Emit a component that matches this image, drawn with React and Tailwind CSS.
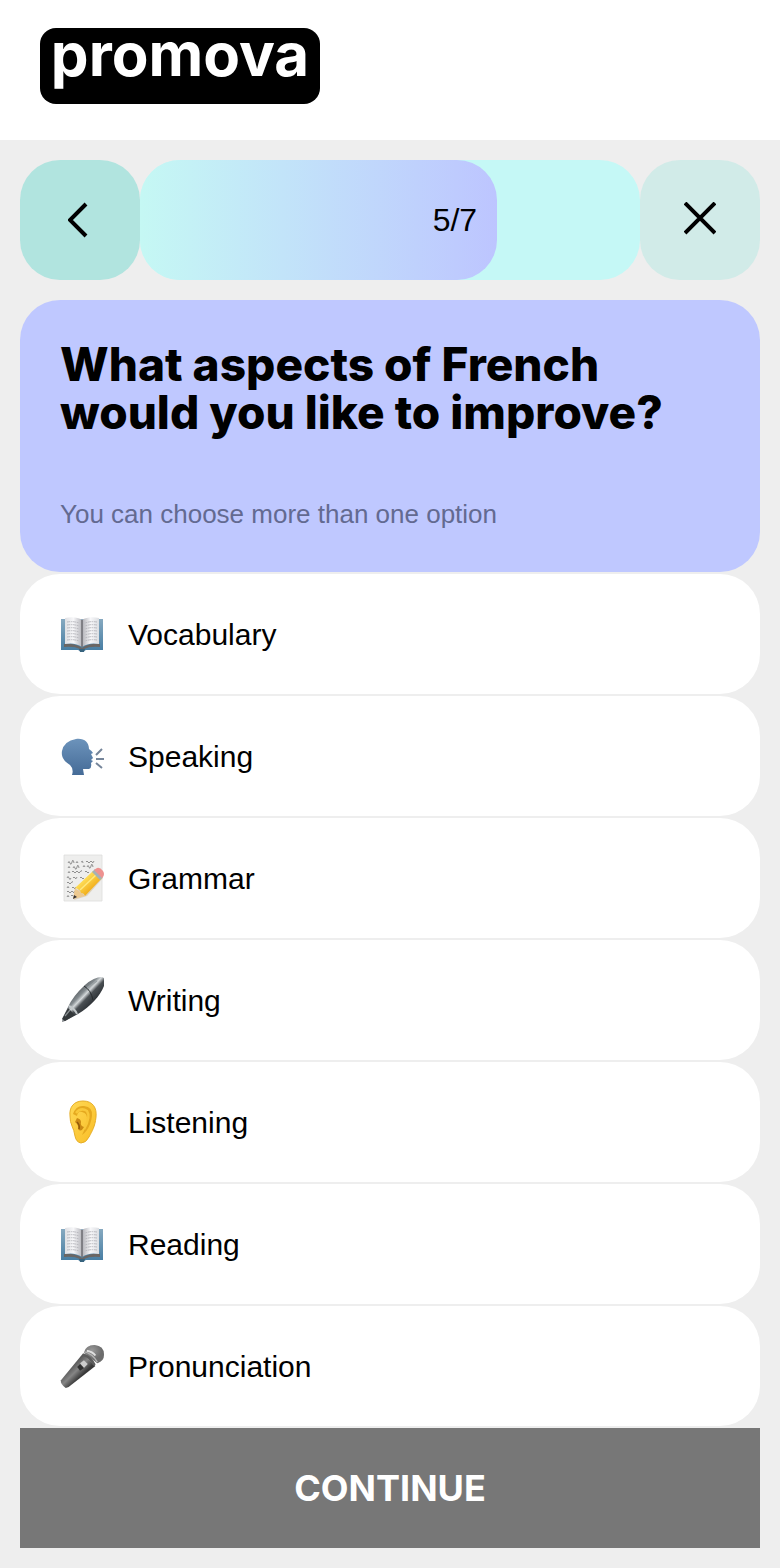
import { useState } from "react";

const BookIcon = () => (
  <svg viewBox="-1 0 44 36" className="w-11" aria-hidden="true">
    <defs>
      <linearGradient id="cover" x1="0" y1="0" x2="0" y2="1">
        <stop offset="0" stopColor="#86a9c0" />
        <stop offset="1" stopColor="#467da3" />
      </linearGradient>
      <linearGradient id="pageLeft" x1="0" y1="0" x2="1" y2="0">
        <stop offset="0" stopColor="#dfe0e4" />
        <stop offset="0.5" stopColor="#f7f7f9" />
        <stop offset="1" stopColor="#b5b5bb" />
      </linearGradient>
      <linearGradient id="pageRight" x1="1" y1="0" x2="0" y2="0">
        <stop offset="0" stopColor="#dcdee2" />
        <stop offset="0.5" stopColor="#f7f7f9" />
        <stop offset="1" stopColor="#b0b0b6" />
      </linearGradient>
    </defs>
    <path d="M0 3H42V34H25Q24 35 21 35Q18 35 17 34H0Z" fill="url(#cover)" />
    <path d="M3 28Q14 27 21 32Q28 27 39 28V31Q29 30 23 33H19Q13 30 3 31Z" fill="#6a6664" />
    <path d="M4 2Q15 0 21 4V31Q14 26 4 28Z" fill="url(#pageLeft)" />
    <path d="M38 2Q27 0 21 4V31Q28 26 38 28Z" fill="url(#pageRight)" />
    <path d="M21 4V31" stroke="#68686d" strokeWidth="1.4" />
    <path
      d="M6 6Q13 5 18 7M6 9Q13 8 18 10M6 12Q13 11 18 13M6 15Q13 14 18 16M6 18Q13 17 18 19M6 21Q13 20 18 22M6 24Q13 23 18 25M36 6Q29 5 24 7M36 9Q29 8 24 10M36 12Q29 11 24 13M36 15Q29 14 24 16M36 18Q29 17 24 19M36 21Q29 20 24 22M36 24Q29 23 24 25"
      fill="none"
      stroke="#acacb3"
      strokeWidth="0.8"
      strokeDasharray="3 0.7 1.6 0.6"
    />
    <path d="M18 33H24L23 36H19Z" fill="#37637e" />
  </svg>
);

const SpeakingIcon = () => (
  <svg viewBox="0 -3 44 44" className="w-11" aria-hidden="true">
    <defs>
      <linearGradient id="head" x1="0" y1="0" x2="0" y2="1">
        <stop offset="0" stopColor="#6c93bb" />
        <stop offset="1" stopColor="#456b97" />
      </linearGradient>
    </defs>
    <path
      d="M16 2C24 1 29 5 29 12Q32 14 33 16L31 17L33 21L31 23L33 24L31 26Q32 31 29 32L23 32L24 38H12Q14 32 10 28C4 24 1 20 2 14Q4 4 16 2Z"
      fill="url(#head)"
    />
    <path d="M36 18L42 12M36 22H45M36 26L42 31" stroke="#75859a" strokeWidth="2" fill="none" />
  </svg>
);

const GrammarIcon = () => (
  <svg viewBox="-1 0 44 48" className="w-11" aria-hidden="true">
    <defs>
      <linearGradient id="pencil" x1="0" y1="0" x2="1" y2="1">
        <stop offset="0.3" stopColor="#ffe15c" />
        <stop offset="0.65" stopColor="#f3b321" />
      </linearGradient>
    </defs>
    <path d="M3 1H41V47H3Z" fill="#eeeeed" stroke="#dddddc" strokeWidth="0.8" />
    <path
      d="M7 9q1-3 2 0t2-1t2 1m2 0q1-3 2 0m3-1q2-2 2 1m3-1q1-2 2 0t2 0t2 0t2-1M7 14q1-3 2 0m3 0q1-3 2 0t2-1t2 1m4-1q1-3 2 0m2 0q1-3 2 0t2-1t2 1M7 19q1-3 2 0m2-1q1-2 2 0t2 0t2 0t2 0t2-1m3 1q1-2 2 0t2 0M6 24q1-3 2 0t2 0m2 0q1-2 2 0t2-1m3 1q1-2 2 0t2 0M6 29q1-2 2 0t2 0t2-1M6 34q1-3 2 0m3 0q1-2 2 0t2-1M6 38q1-2 2 0t2 0t2 0t2-1M6 43q1-3 2 0m2-1q1-2 2 0"
      fill="none"
      stroke="#777777"
      strokeWidth="0.8"
    />
    <path d="M13 46L17 34L35 18L42 24L26 42Z" fill="#c5a97b" opacity="0.4" />
    <path d="M12 45L14 34L24 42Z" fill="#edc990" />
    <path d="M12 45L13 41L16 43Z" fill="#363334" />
    <path d="M14 34L32 17L41 24L24 42Q23 39 20 39Q19 35 14 34Z" fill="url(#pencil)" />
    <path d="M19 36L36 20" stroke="#ffe97e" strokeWidth="1.5" />
    <path d="M31 18L34 15L42 23L39 26Z" fill="#a5b2b5" />
    <path d="M33 16L36 14Q39 13 42 17Q44 20 42 23L41 24Z" fill="#ee9290" />
  </svg>
);

const PenIcon = () => (
  <svg viewBox="-1 1 44 46" className="w-11" aria-hidden="true">
    <defs>
      <linearGradient id="barrel" x1="0.25" y1="0.25" x2="0.75" y2="0.75">
        <stop offset="0" stopColor="#353a3e" />
        <stop offset="0.33" stopColor="#858c90" />
        <stop offset="0.43" stopColor="#d4d8da" />
        <stop offset="0.55" stopColor="#4a4f53" />
        <stop offset="1" stopColor="#151a1e" />
      </linearGradient>
    </defs>
    <path d="M1 46L1 43L7 31Q12 20 24 9Q33 1 41 1Q46 3 43 10C39 20 30 30 17 38L4 45Z" fill="url(#barrel)" />
    <path d="M1 43L7 32L14 39L4 45Z" fill="#34383b" />
    <path d="M4 40L9 34" stroke="#8a9093" strokeWidth="1.2" />
    <path d="M8 30Q14 33 16 38" fill="none" stroke="#c3c8ca" strokeWidth="2" />
    <path d="M23 10Q30 14 32 24" fill="none" stroke="#25292c" strokeWidth="1" />
    <path d="M26 12L36 5" stroke="#9aa1a4" strokeWidth="1.5" />
  </svg>
);

const EarIcon = () => (
  <svg viewBox="-1 0 44 44" className="w-11" aria-hidden="true">
    <defs>
      <linearGradient id="ear" x1="0" y1="0" x2="1" y2="1">
        <stop offset="0" stopColor="#ffd956" />
        <stop offset="1" stopColor="#f9bd25" />
      </linearGradient>
    </defs>
    <path
      d="M9 16C8 7 13 1 22 1C32 1 36 8 35 17C34 27 31 31 28 37Q25 43 20 43Q15 42 14 36Q13 30 11 26Q9 22 9 16Z"
      fill="url(#ear)"
      stroke="#e6ae28"
      strokeWidth="1"
    />
    <path
      d="M12 14Q15 5 23 6Q32 7 31 16Q30 24 26 30Q23 34 21 35Q25 27 26 21Q27 13 21 12Q17 11 16 16Z"
      fill="#e5a91f"
    />
    <path d="M15 13Q20 7 26 11Q30 17 23 29" fill="none" stroke="#f9c739" strokeWidth="2.5" />
    <path d="M16 18Q20 19 20 22Q19 26 23 27Q20 33 17 29Q18 25 14 22Z" fill="#cb8a14" />
    <path d="M16 22Q19 25 18 29" fill="none" stroke="#91580a" strokeWidth="1.5" />
  </svg>
);

const MicIcon = () => (
  <svg viewBox="0 0 46 46" className="w-11" aria-hidden="true">
    <defs>
      <linearGradient id="handle" x1="0.25" y1="0.25" x2="0.75" y2="0.75">
        <stop offset="0.1" stopColor="#4b4b4b" />
        <stop offset="0.45" stopColor="#858585" />
        <stop offset="0.75" stopColor="#383838" />
      </linearGradient>
      <radialGradient id="grille" cx="0.4" cy="0.3">
        <stop offset="0" stopColor="#bcbcbc" />
        <stop offset="1" stopColor="#707070" />
      </radialGradient>
      <pattern id="mesh" width="2" height="2" patternUnits="userSpaceOnUse">
        <path d="M0 0L2 2M2 0L0 2" stroke="#666666" strokeWidth="0.4" />
      </pattern>
    </defs>
    <path d="M1 38Q0 42 6 46L9 45L37 23L24 10Z" fill="url(#handle)" />
    <path d="M25 9Q27 1 36 1Q46 2 46 11Q46 18 39 20Z" fill="url(#grille)" />
    <path d="M25 9Q27 1 36 1Q46 2 46 11Q46 18 39 20Z" fill="url(#mesh)" />
    <path d="M24 11Q32 13 36 22" fill="none" stroke="#5c5c5c" strokeWidth="3" />
    <path d="M25 8Q34 10 39 19" fill="none" stroke="#b4b4b4" strokeWidth="1.5" />
    <path d="M28 7Q34 8 37 12" fill="none" stroke="#e0e0e0" strokeWidth="2" />
    <path d="M21 20L25 17L29 21L25 25Z" fill="#cccccc" />
    <path d="M18 24L21 21L25 25L21 28Z" fill="#303030" />
  </svg>
);

const options = [
  { id: "vocabulary", label: "Vocabulary", Icon: BookIcon },
  { id: "speaking", label: "Speaking", Icon: SpeakingIcon },
  { id: "grammar", label: "Grammar", Icon: GrammarIcon },
  { id: "writing", label: "Writing", Icon: PenIcon },
  { id: "listening", label: "Listening", Icon: EarIcon },
  { id: "reading", label: "Reading", Icon: BookIcon },
  { id: "pronunciation", label: "Pronunciation", Icon: MicIcon },
];

const Header = () => (
  <header className="bg-white px-10 pt-7 pb-9">
    <a
      href="#"
      className="flex h-19 w-70 justify-center rounded-2xl bg-black font-['Inter',sans-serif] text-[60px] leading-13 font-bold text-white"
    >
      promova
    </a>
  </header>
);

const Progress = ({ step, total }) => (
  <nav className="flex h-30">
    <button
      type="button"
      aria-label="Back"
      className="flex w-30 items-center justify-center rounded-[40px] bg-[#b1e4df]"
    >
      <svg viewBox="2 0 24 36" className="h-9 w-6" fill="none" stroke="black" strokeWidth="4">
        <path d="M20 2L4 18L20 34" />
      </svg>
    </button>
    <div className="flex-1 overflow-hidden rounded-[40px] bg-[#c5f8f6]">
      <div
        className="flex h-full items-center justify-end rounded-r-[40px] bg-linear-to-r from-[#c5f8f4] to-[#bdc5ff] pr-5 text-[32px]"
        style={{ width: `${(step / total) * 100}%` }}
      >
        {step}/{total}
      </div>
    </div>
    <button
      type="button"
      aria-label="Close"
      className="flex w-30 items-center justify-center rounded-[40px] bg-[#d1ebe8]"
    >
      <svg viewBox="0 0 32 36" className="h-9 w-8" fill="none" stroke="black" strokeWidth="4">
        <path d="M1 1L31 31M31 1L1 31" />
      </svg>
    </button>
  </nav>
);

const App = () => {
  const [selected, setSelected] = useState([]);

  const toggle = (id) => {
    setSelected((prev) =>
      prev.includes(id) ? prev.filter((item) => item !== id) : [...prev, id]
    );
  };

  return (
    <div className="min-h-screen bg-[#eeeeee] font-['Liberation_Sans',Arial,sans-serif] text-black">
      <Header />
      <main className="flex flex-col gap-5 p-5">
        <Progress step={5} total={7} />
        <form className="flex flex-col gap-0.5" onSubmit={(e) => e.preventDefault()}>
          <div className="rounded-[40px] bg-[#bfc8ff] p-10">
            <h1 className="font-['Inter',sans-serif] text-[46px] leading-12 font-extrabold">
              What aspects of French would you like to improve?
            </h1>
            <p className="mt-15 text-[26px] leading-9 text-[#636a91]">
              You can choose more than one option
            </p>
          </div>
          {options.map(({ id, label, Icon }) => (
            <label
              key={id}
              className="relative flex h-30 cursor-pointer items-center gap-6 rounded-[40px] bg-white px-10 text-[30px] has-checked:bg-[#c5f8f6]"
            >
              <input
                type="checkbox"
                className="sr-only"
                checked={selected.includes(id)}
                onChange={() => toggle(id)}
              />
              <Icon />
              {label}
            </label>
          ))}
          <button
            type="submit"
            className="h-30 bg-[#777777] font-['Inter',sans-serif] text-[36px] font-bold text-white"
          >
            CONTINUE
          </button>
        </form>
      </main>
    </div>
  );
};

export default App;
